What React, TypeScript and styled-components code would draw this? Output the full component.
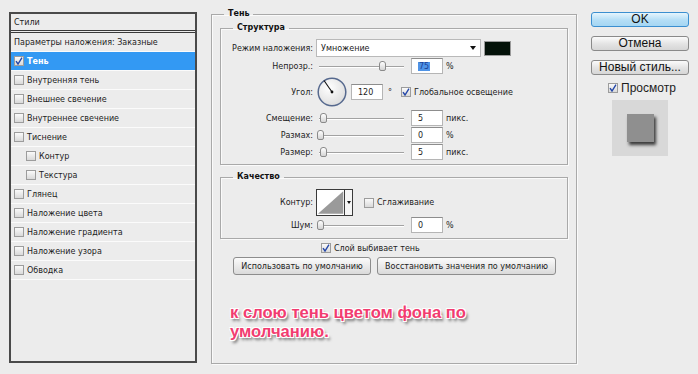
import React from 'react';
import styled, { createGlobalStyle } from 'styled-components';

const Global = createGlobalStyle`
  html, body { margin: 0; padding: 0; background: #ececec; }
  body {
    font-family: "DejaVu Sans", "Liberation Sans", sans-serif;
    font-size: 8px;
    color: #1c1c1c;
  }
  * { box-sizing: border-box; }
`;

const Page = styled.div`
  width: 698px;
  height: 374px;
  display: flex;
  align-items: flex-start;
  background: #ececec;
  overflow: hidden;
`;

/* ---------- left styles list ---------- */
const StylesPanel = styled.div`
  margin: 12px 0 0 9px;
  width: 188px;
  height: 351px;
  border: 2px solid #4a4a4a;
  background: #ececec;
  display: flex;
  flex-direction: column;
`;

const PanelHeader = styled.div`
  height: 19px;
  padding-left: 3px;
  display: flex;
  align-items: center;
  border-bottom: 3px double #3a3a3a;
`;

const StyleRow = styled.div<{ $active?: boolean; $indent?: boolean }>`
  height: 19px;
  display: flex;
  align-items: center;
  gap: 3px;
  padding-left: ${(p) => (p.$indent ? 15 : 3)}px;
  border-bottom: 1px solid #fbfbfb;
  background: ${(p) => (p.$active ? '#3399f3' : 'transparent')};
  color: ${(p) => (p.$active ? '#fff' : '#1c1c1c')};
  font-weight: ${(p) => (p.$active ? 'bold' : 'normal')};
`;

const Box = styled.span<{ $size?: number }>`
  width: ${(p) => p.$size ?? 10}px;
  height: ${(p) => p.$size ?? 10}px;
  flex: none;
  display: inline-flex;
  align-items: center;
  justify-content: center;
  border: 1px solid #9c9c9c;
  background: linear-gradient(#fafafa, #d9d9d9);
`;

const Check = ({ checked, size }: { checked?: boolean; size?: number }) => (
  <Box $size={size}>
    {checked && (
      <svg width="8" height="8" viewBox="0 0 8 8">
        <path d="M1 4.2 L3 7 L7 0.6" fill="none" stroke="#2346a8" strokeWidth="1.4" />
      </svg>
    )}
  </Box>
);

/* ---------- middle settings ---------- */
const Group = styled.fieldset<{ $h?: number; $pad?: string }>`
  margin: 0;
  padding: ${(p) => p.$pad ?? '0'};
  border: 1px solid #a9a9a9;
  box-shadow: 1px 1px 0 #fafafa, inset 1px 1px 0 #fafafa;
  min-width: 0;
  ${(p) => (p.$h ? `height: ${p.$h}px;` : '')}
`;

const Legend = styled.legend`
  padding: 0 4px;
  margin-left: 12px;
  font-weight: bold;
  line-height: 12px;
  color: #111;
`;

const MainGroup = styled(Group)`
  margin: 8px 0 0 14px;
  width: 366px;
  display: flex;
  flex-direction: column;
`;

const Inner = styled(Group)<{ $mt?: number }>`
  margin: ${(p) => p.$mt ?? 0}px 8px 0 8px;
`;

const Row = styled.div<{ $h: number; $mt: number }>`
  height: ${(p) => p.$h}px;
  margin-top: ${(p) => p.$mt}px;
  display: flex;
  align-items: center;
`;

const Label = styled.span`
  width: 92px;
  margin-right: 3px;
  text-align: right;
  flex: none;
`;

const Dropdown = styled.div`
  width: 165px;
  height: 18px;
  background: #fff;
  border: 1px solid #b9b9b9;
  display: flex;
  align-items: center;
  justify-content: space-between;
  padding: 0 4px 0 4px;
`;

const Arrow = styled.span`
  width: 0;
  height: 0;
  border-left: 3.5px solid transparent;
  border-right: 3.5px solid transparent;
  border-top: 4px solid #111;
`;

const Swatch = styled.div`
  width: 27px;
  height: 15px;
  margin-left: 3px;
  background: #041209;
  border: 1px solid #9a9a9a;
`;

const SliderWrap = styled.div`
  position: relative;
  width: 91px;
  height: 14px;
  flex: none;
`;

const Track = styled.div`
  position: absolute;
  left: 3px;
  right: 3px;
  top: 7px;
  height: 1px;
  background: #a2a2a2;
  box-shadow: 0 1px 0 #fff;
`;

const Thumb = styled.div`
  position: absolute;
  top: 2px;
  width: 7px;
  height: 10px;
  margin-left: -3.5px;
  border: 1px solid #8a8a8a;
  border-radius: 3px 3px 2px 2px;
  background: linear-gradient(#ffffff, #d4d4d4);
`;

const Slider = ({ pos }: { pos: number }) => (
  <SliderWrap>
    <Track />
    <Thumb style={{ left: pos }} />
  </SliderWrap>
);

const Field = styled.div<{ $ml?: number }>`
  width: 32px;
  height: 16px;
  margin-left: ${(p) => p.$ml ?? 4}px;
  background: #fff;
  border: 1px solid #b5b5b5;
  border-top-color: #8d8d8d;
  display: flex;
  align-items: center;
  padding-left: 6px;
  flex: none;
`;

const Selected = styled.span`
  background: #4f93e6;
  color: #1d3f96;
  padding: 0 1px;
`;

const Unit = styled.span<{ $ml?: number }>`
  margin-left: ${(p) => p.$ml ?? 3}px;
`;

const DialSvg = styled.svg`
  margin-left: 1px;
  flex: none;
`;

const Dial = () => (
  <DialSvg width="30" height="30" viewBox="0 0 30 30">
    <defs>
      <radialGradient id="dg" cx="40%" cy="35%" r="70%">
        <stop offset="0%" stopColor="#ffffff" />
        <stop offset="100%" stopColor="#dcdcdc" />
      </radialGradient>
    </defs>
    <circle cx="15" cy="15" r="13.8" fill="url(#dg)" stroke="#56698e" strokeWidth="1.5" />
    <line x1="15" y1="15" x2="7" y2="3.5" stroke="#111" strokeWidth="1.1" />
    <circle cx="15" cy="15" r="1.4" fill="#111" />
  </DialSvg>
);

const CheckLabel = styled.label<{ $ml?: number }>`
  display: flex;
  align-items: center;
  gap: 3px;
  margin-left: ${(p) => p.$ml ?? 0}px;
`;

const ContourBox = styled.div`
  width: 37px;
  height: 27px;
  display: flex;
  border: 1px solid #3a3a3a;
  background: #fff;
  flex: none;
`;

const ContourDrop = styled.div`
  width: 8px;
  border-left: 1px solid #3a3a3a;
  display: flex;
  align-items: center;
  justify-content: center;
  background: #f6f6f6;
`;

const SmallArrow = styled(Arrow)`
  border-left-width: 2.5px;
  border-right-width: 2.5px;
  border-top-width: 3px;
`;

const KnockRow = styled.div`
  margin-top: 3px;
  height: 12px;
  padding-left: 109px;
  display: flex;
  align-items: center;
`;

const ButtonRow = styled.div`
  margin-top: 3px;
  padding-left: 21px;
  display: flex;
  gap: 6px;
`;

const SmallButton = styled.button<{ $w: number }>`
  width: ${(p) => p.$w}px;
  height: 18px;
  padding: 0;
  font: inherit;
  color: #1c1c1c;
  border: 1px solid #8d8d8d;
  border-radius: 3px;
  background: linear-gradient(#fbfbfb, #dadada);
`;

const Note = styled.div`
  margin: 28px 0 0 18px;
  font-family: "Liberation Sans", Arial, sans-serif;
  font-weight: bold;
  font-size: 16.6px;
  line-height: 19px;
  color: #f23c70;
  width: 270px;
  text-shadow:
    -1px -1px 0 #fff, 1px -1px 0 #fff, -1px 1px 0 #fff, 1px 1px 0 #fff,
    2px 3px 3px rgba(0, 0, 0, 0.6);
`;

/* ---------- right column ---------- */
const Side = styled.div`
  margin: 12px 0 0 14px;
  width: 98px;
  display: flex;
  flex-direction: column;
  font-family: "Liberation Sans", Arial, sans-serif;
  font-size: 12px;
`;

const BigButton = styled.button<{ $primary?: boolean }>`
  height: 15px;
  margin-bottom: 9px;
  padding: 0;
  font: inherit;
  line-height: 13px;
  color: #111;
  border-radius: 3px;
  border: 1px solid ${(p) => (p.$primary ? '#3b8fd0' : '#8a8a8a')};
  background: ${(p) =>
    p.$primary
      ? 'linear-gradient(#e6f5fd, #b4def6 55%, #a5d6f3)'
      : 'linear-gradient(#fbfbfb, #e3e3e3 55%, #d6d6d6)'};
`;

const PreviewToggle = styled.label`
  margin: -2px 0 0 17px;
  height: 12px;
  display: flex;
  align-items: center;
  gap: 3px;
`;

const PreviewBox = styled.div`
  margin: 6px 0 0 21px;
  width: 56px;
  height: 56px;
  background: #d8d8d8;
  display: flex;
  align-items: center;
  justify-content: center;
`;

const PreviewSquare = styled.div`
  width: 27px;
  height: 28px;
  background: #8f8f8f;
  box-shadow: 2px 3px 3px rgba(20, 20, 20, 0.8);
`;

const styleItems: { name: string; indent?: boolean; active?: boolean }[] = [
  { name: 'Тень', active: true },
  { name: 'Внутренняя тень' },
  { name: 'Внешнее свечение' },
  { name: 'Внутреннее свечение' },
  { name: 'Тиснение' },
  { name: 'Контур', indent: true },
  { name: 'Текстура', indent: true },
  { name: 'Глянец' },
  { name: 'Наложение цвета' },
  { name: 'Наложение градиента' },
  { name: 'Наложение узора' },
  { name: 'Обводка' },
];

export default function App() {
  return (
    <Page>
      <Global />
      <StylesPanel>
        <PanelHeader>Стили</PanelHeader>
        <StyleRow>Параметры наложения: Заказные</StyleRow>
        {styleItems.map((it) => (
          <StyleRow key={it.name} $active={it.active} $indent={it.indent}>
            <Check checked={it.active} />
            {it.name}
          </StyleRow>
        ))}
      </StylesPanel>

      <MainGroup $h={356} $pad="2px 0 0 0">
        <Legend>Тень</Legend>
        <Inner $pad="0 0 4px 0">
          <Legend>Структура</Legend>
          <Row $h={18} $mt={5}>
            <Label>Режим наложения:</Label>
            <Dropdown>
              Умножение
              <Arrow />
            </Dropdown>
            <Swatch />
          </Row>
          <Row $h={16} $mt={1}>
            <Label>Непрозр.:</Label>
            <Slider pos={66} />
            <Field>
              <Selected>75</Selected>
            </Field>
            <Unit>%</Unit>
          </Row>
          <Row $h={30} $mt={3}>
            <Label>Угол:</Label>
            <Dial />
            <Field $ml={4}>120</Field>
            <Unit $ml={5}>°</Unit>
            <CheckLabel $ml={9}>
              <Check checked />
              Глобальное освещение
            </CheckLabel>
          </Row>
          <Row $h={16} $mt={3}>
            <Label>Смещение:</Label>
            <Slider pos={7} />
            <Field>5</Field>
            <Unit>пикс.</Unit>
          </Row>
          <Row $h={16} $mt={1}>
            <Label>Размах:</Label>
            <Slider pos={4} />
            <Field>0</Field>
            <Unit>%</Unit>
          </Row>
          <Row $h={16} $mt={1}>
            <Label>Размер:</Label>
            <Slider pos={7} />
            <Field>5</Field>
            <Unit>пикс.</Unit>
          </Row>
        </Inner>

        <Inner $pad="0 0 5px 0" $mt={6}>
          <Legend>Качество</Legend>
          <Row $h={27} $mt={6}>
            <Label>Контур:</Label>
            <ContourBox>
              <svg width="28" height="25" viewBox="0 0 28 25">
                <polygon points="1,24 27,1 27,24" fill="#9a9a9a" />
              </svg>
              <ContourDrop>
                <SmallArrow />
              </ContourDrop>
            </ContourBox>
            <CheckLabel $ml={11}>
              <Check />
              Сглаживание
            </CheckLabel>
          </Row>
          <Row $h={16} $mt={1}>
            <Label>Шум:</Label>
            <Slider pos={4} />
            <Field>0</Field>
            <Unit>%</Unit>
          </Row>
        </Inner>

        <KnockRow>
          <CheckLabel>
            <Check checked />
            Слой выбивает тень
          </CheckLabel>
        </KnockRow>
        <ButtonRow>
          <SmallButton $w={138}>Использовать по умолчанию</SmallButton>
          <SmallButton $w={179}>Восстановить значения по умолчанию</SmallButton>
        </ButtonRow>
        <Note>к слою тень цветом фона по умолчанию.</Note>
      </MainGroup>

      <Side>
        <BigButton $primary>OK</BigButton>
        <BigButton>Отмена</BigButton>
        <BigButton>Новый стиль...</BigButton>
        <PreviewToggle>
          <Check checked />
          Просмотр
        </PreviewToggle>
        <PreviewBox>
          <PreviewSquare />
        </PreviewBox>
      </Side>
    </Page>
  );
}
